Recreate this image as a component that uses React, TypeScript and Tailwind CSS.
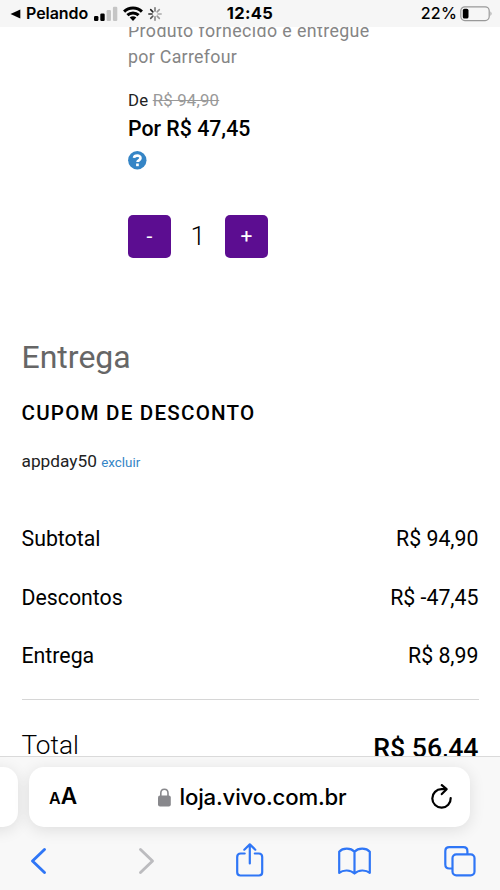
import React from "react";

function StatusBar() {
  return (
    <header className="relative z-10 flex h-[27px] shrink-0 items-center justify-between bg-[#f6f6f6] pl-[10px] pr-[7px] font-['Inter','Liberation_Sans',sans-serif] text-black">
      <div className="flex w-[160px] items-center">
        <svg width="11" height="10" viewBox="0 0 11 10"><path d="M0.5 5 10.3 0.4V9.4Z" /></svg>
        <span className="ml-[5px] w-[63px] whitespace-nowrap text-[16px] font-semibold leading-[27px] tracking-[-0.05px]">Pelando</span>
        <svg className="ml-[5px]" width="24" height="16" viewBox="0 0 24 16">
          <rect x="0" y="10" width="4.4" height="5" rx="1.2" />
          <rect x="6.3" y="7.5" width="4.4" height="7.5" rx="1.2" />
          <rect x="12.6" y="4" width="4.4" height="11" rx="1.2" fill="#c5c5c5" />
          <rect x="18.9" y="0.7" width="4.4" height="14.3" rx="1.2" fill="#c5c5c5" />
        </svg>
        <svg className="ml-[5px]" width="20" height="15" viewBox="0 0 20 15" fill="none" stroke="#000" strokeWidth="3">
          <path d="M1.1 5.6C6 .7 14 .7 18.9 5.6" />
          <path d="M4.4 9.2c3.2-3 8-3 11.2 0" />
          <path d="M6.7 11.6Q10 8.8 13.3 11.6L10 15Z" fill="#000" stroke="none" />
        </svg>
        <svg className="ml-[5px]" width="14" height="14" viewBox="0 0 13 13" fill="none" strokeWidth="1.5" strokeLinecap="round">
          <path d="M6.5.8v3" stroke="#777" /><path d="m10.5 2.5-2 2" stroke="#999" />
          <path d="M12.2 6.5h-3" stroke="#aaa" /><path d="m10.5 10.5-2-2" stroke="#999" />
          <path d="M6.5 12.2v-3" stroke="#888" /><path d="m2.5 10.5 2-2" stroke="#555" />
          <path d="M.8 6.5h3" stroke="#333" /><path d="m2.5 2.5 2 2" stroke="#222" />
        </svg>
      </div>
      <span className="mr-[3px] text-[16.5px] font-bold leading-[19px] tracking-[0.35px]">12:45</span>
      <div className="flex w-[160px] items-center justify-end">
        <span className="whitespace-nowrap text-[16px] font-medium leading-[27px] tracking-[0.2px]">22%</span>
        <svg className="ml-[3px]" width="33" height="16" viewBox="0 0 33 16">
          <rect x=".8" y=".8" width="28.4" height="13.8" rx="4" fill="none" stroke="#999" strokeWidth="1.2" />
          <rect x="2.8" y="2.8" width="5.7" height="9.8" rx="1.7" />
          <path d="M30.5 5.2q2 2.4 0 4.8Z" fill="#999" />
        </svg>
      </div>
    </header>
  );
}

function Product() {
  return (
    <section className="-mt-[9.5px] pl-[128px]">
      <p className="whitespace-nowrap text-[17.8px] leading-[26px] tracking-[0.4px] text-[#858585]">
        Produto fornecido e entregue
      </p>
      <p className="mt-[0.5px] whitespace-nowrap text-[17.8px] leading-[26px] tracking-[0.3px] text-[#858585]">
        por Carrefour
      </p>
      <p className="mt-[18px] text-[16.8px] leading-[24px] tracking-[0.2px] text-[#222]">
        De <span className="text-[#999] line-through">R$ 94,90</span>
      </p>
      <p className="mt-[2px] text-[21.3px] font-medium leading-[30px] text-black">Por R$ 47,45</p>
      <svg className="mt-[7px] block" width="19" height="19" viewBox="0 0 19 19" fill="none">
        <circle cx="9.3" cy="9.3" r="9.2" fill="#3585c6" />
        <path d="M6 6.9C6.3 3.9 12.7 3.7 12.5 7.1c-.1 2.2-3 2.2-3 4" stroke="#fff" strokeWidth="2.6" />
        <path d="M8.1 12.5h2.7v2.7H8.1z" fill="#fff" />
      </svg>
      <div className="mt-[45px] flex h-[43px] w-[140px] items-center justify-between">
        <button className="h-[43px] w-[43px] rounded-[5px] bg-[#5c0d91] text-[21px] leading-[43px] text-white">-</button>
        <span className="text-[26.7px] font-light leading-[43px] text-black">1</span>
        <button className="h-[43px] w-[43px] rounded-[5px] bg-[#5c0d91] text-[21px] leading-[43px] text-white">+</button>
      </div>
    </section>
  );
}

const rows = [
  { label: "Subtotal", value: "R$ 94,90" },
  { label: "Descontos", value: "R$ -47,45" },
  { label: "Entrega", value: "R$ 8,99" },
];

function Summary() {
  return (
    <section className="px-[21.5px] text-black">
      <h2 className="mt-[79px] text-[32px] leading-[40px] text-[#666]">Entrega</h2>
      <h3 className="mt-[21px] text-[20.6px] font-medium leading-[30px] tracking-[1.2px]">CUPOM DE DESCONTO</h3>
      <p className="mt-[20px] text-[17.3px] leading-[26px] text-[#222]">
        appday50 <a className="text-[13.4px] text-[#3585c6]">excluir</a>
      </p>
      <div className="mt-[34px]">
        {rows.map((row) => (
          <div key={row.label} className="flex h-[58.5px] items-center justify-between text-[21.3px]">
            <span>{row.label}</span>
            <span>{row.value}</span>
          </div>
        ))}
      </div>
      <div className="mt-[13px] h-[1.5px] bg-[#d6d6d6]" />
      <div className="mt-[25px] flex h-[40px] justify-between">
        <span className="text-[26.2px] font-light leading-[40px]">Total</span>
        <span className="mt-[2.5px] text-[26.7px] font-medium leading-[40px]">R$ 56,44</span>
      </div>
    </section>
  );
}

function BrowserBar() {
  return (
    <footer className="relative z-10 h-[134px] shrink-0 overflow-hidden border-t border-[#dadada] bg-[#f8f8f8]">
      <div className="-ml-[41px] flex gap-[11px] pt-[10px] font-['Inter','Liberation_Sans',sans-serif]">
        <div className="h-[60px] w-[59px] shrink-0 rounded-[15px] bg-white shadow-[0_3px_16px_rgba(0,0,0,0.11)]" />
        <div className="flex h-[60px] w-[441px] shrink-0 items-center rounded-[15px] bg-white pl-[20px] pr-[18px] shadow-[0_3px_16px_rgba(0,0,0,0.11)]">
          <div className="flex w-[60px] items-baseline font-semibold leading-[61px]">
            <span className="text-[16px]">A</span>
            <span className="text-[22.6px]">A</span>
          </div>
          <div className="flex flex-1 items-center pl-[48.5px]">
            <svg width="13" height="19" viewBox="0 0 13 19" fill="none">
              <path d="M2.8 9V5.2c0-5.2 7.2-5.2 7.2 0V9" stroke="#88888c" strokeWidth="1.6" />
              <rect x="0" y="7.6" width="12.8" height="10.8" rx="2" fill="#88888c" />
            </svg>
            <span className="ml-[9px] whitespace-nowrap text-[22.2px] font-medium leading-[60px] tracking-[-0.17px] text-black">loja.vivo.com.br</span>
          </div>
          <svg width="22" height="26" viewBox="0 0 22 26" fill="none" stroke="#000" strokeWidth="2.2" strokeLinecap="round" strokeLinejoin="round">
            <path d="M15.8 5.2H11.6A9.2 9.2 0 1 0 20.7 14" />
            <path d="m11.8 1.1 4.8 4.1-4.8 4.9" />
          </svg>
        </div>
      </div>
      <nav className="mt-[14px] flex items-center pl-[30px] text-[#2f76f6]">
        <svg width="17" height="37" viewBox="0 0 17 37" fill="none" stroke="currentColor" strokeWidth="2.9" strokeLinecap="round" strokeLinejoin="round"><path d="M14.5 8.5 2.5 20l12 11.5" /></svg>
        <svg className="ml-[91px] text-[#bcbcbf]" width="17" height="37" viewBox="0 0 17 37" fill="none" stroke="currentColor" strokeWidth="2.9" strokeLinecap="round" strokeLinejoin="round"><path d="m2.5 8.5 12 11.5-12 11.5" /></svg>
        <svg className="ml-[81px]" width="28" height="37" viewBox="0 0 28 37" fill="none" stroke="currentColor" strokeWidth="2.2" strokeLinecap="round" strokeLinejoin="round"><path d="M8.7 12.5H4.7q-3.5 0-3.5 3.5v15.3q0 3.2 3.2 3.2h18.6q3.2 0 3.2-3.2V16q0-3.5-3.5-3.5h-3.9M13.8 22.5V3.5M8.3 8.7l5.5-5.3 5.5 5.3" /></svg>
        <svg className="ml-[74px]" width="33" height="37" viewBox="0 0 33 37" fill="none" stroke="currentColor" strokeWidth="2.2" strokeLinejoin="round"><path d="M16.5 32.5V10.7C12.8 6.7 4.7 6.7 1.2 10.7v21.2c4-3.3 11.2-3.3 15.3.6 4.1-3.9 11.3-3.9 15.3-.6V10.7c-3.5-4-11.6-4-15.3 0" /></svg>
        <svg className="ml-[72.5px]" width="32" height="37" viewBox="0 0 32 37" fill="none" stroke="currentColor" strokeWidth="2.2"><path d="M8.5 27.5H5.3q-4 0-4-4V10.2q0-4 4-4h14.1q4 0 4 4v3.1" /><rect x="8.5" y="13.3" width="22" height="21" rx="3.8" /></svg>
      </nav>
    </footer>
  );
}

export default function App() {
  return (
    <div className="flex h-[890px] w-[500px] flex-col overflow-hidden bg-white font-['Roboto','Liberation_Sans',sans-serif]">
      <StatusBar />
      <main className="flow-root h-[729px] shrink-0 overflow-hidden">
        <Product />
        <Summary />
      </main>
      <BrowserBar />
    </div>
  );
}
